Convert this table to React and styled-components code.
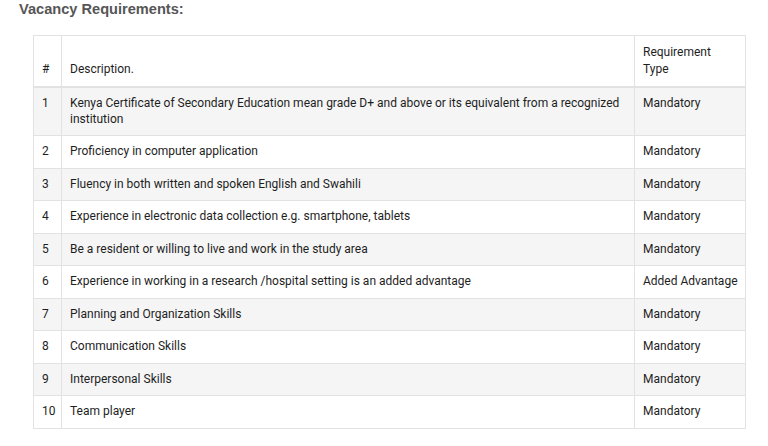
import React from 'react';
import styled, { createGlobalStyle } from 'styled-components';

const GlobalStyle = createGlobalStyle`
  body {
    margin: 0;
    background: #fff;
    font-family: Roboto, "Liberation Sans", Arial, sans-serif;
  }
`;

const Page = styled.div`
  padding: 1px 0 0 19px;
`;

const Heading = styled.h3`
  margin: 0 0 18px;
  font-family: "Liberation Sans", Arial, sans-serif;
  font-size: 14.6px;
  line-height: 16px;
  font-weight: bold;
  color: #565656;
`;

const Table = styled.table`
  margin-left: 14px;
  width: 713px;
  table-layout: fixed;
  border-collapse: collapse;
  font-size: 12px;
  color: #1e1e1e;
`;

const Th = styled.th`
  width: ${(p) => p.w || 'auto'};
  padding: 8px;
  line-height: 17px;
  text-align: left;
  font-weight: normal;
  vertical-align: bottom;
  border: 1px solid #e2e2e2;
  border-bottom: 2px solid #e2e2e2;
`;

const Row = styled.tr`
  background: ${(p) => (p.$striped ? '#f5f5f5' : '#fff')};
`;

const Td = styled.td`
  padding: 8px;
  line-height: 15.5px;
  vertical-align: top;
  white-space: ${(p) => (p.$nowrap ? 'nowrap' : 'normal')};
  border: 1px solid #e2e2e2;
`;

const rows = [
  ['Kenya Certificate of Secondary Education mean grade D+ and above or its equivalent from a recognized institution', 'Mandatory'],
  ['Proficiency in computer application', 'Mandatory'],
  ['Fluency in both written and spoken English and Swahili', 'Mandatory'],
  ['Experience in electronic data collection e.g. smartphone, tablets', 'Mandatory'],
  ['Be a resident or willing to live and work in the study area', 'Mandatory'],
  ['Experience in working in a research /hospital setting is an added advantage', 'Added Advantage'],
  ['Planning and Organization Skills', 'Mandatory'],
  ['Communication Skills', 'Mandatory'],
  ['Interpersonal Skills', 'Mandatory'],
  ['Team player', 'Mandatory'],
];

export default function App() {
  return (
    <Page>
      <GlobalStyle />
      <Heading>Vacancy Requirements:</Heading>
      <Table>
        <thead>
          <tr>
            <Th w="11px">#</Th>
            <Th>Description.</Th>
            <Th w="94px">Requirement Type</Th>
          </tr>
        </thead>
        <tbody>
          {rows.map(([desc, type], i) => (
            <Row key={i} $striped={i % 2 === 0}>
              <Td>{i + 1}</Td>
              <Td>{desc}</Td>
              <Td $nowrap>{type}</Td>
            </Row>
          ))}
        </tbody>
      </Table>
    </Page>
  );
}
